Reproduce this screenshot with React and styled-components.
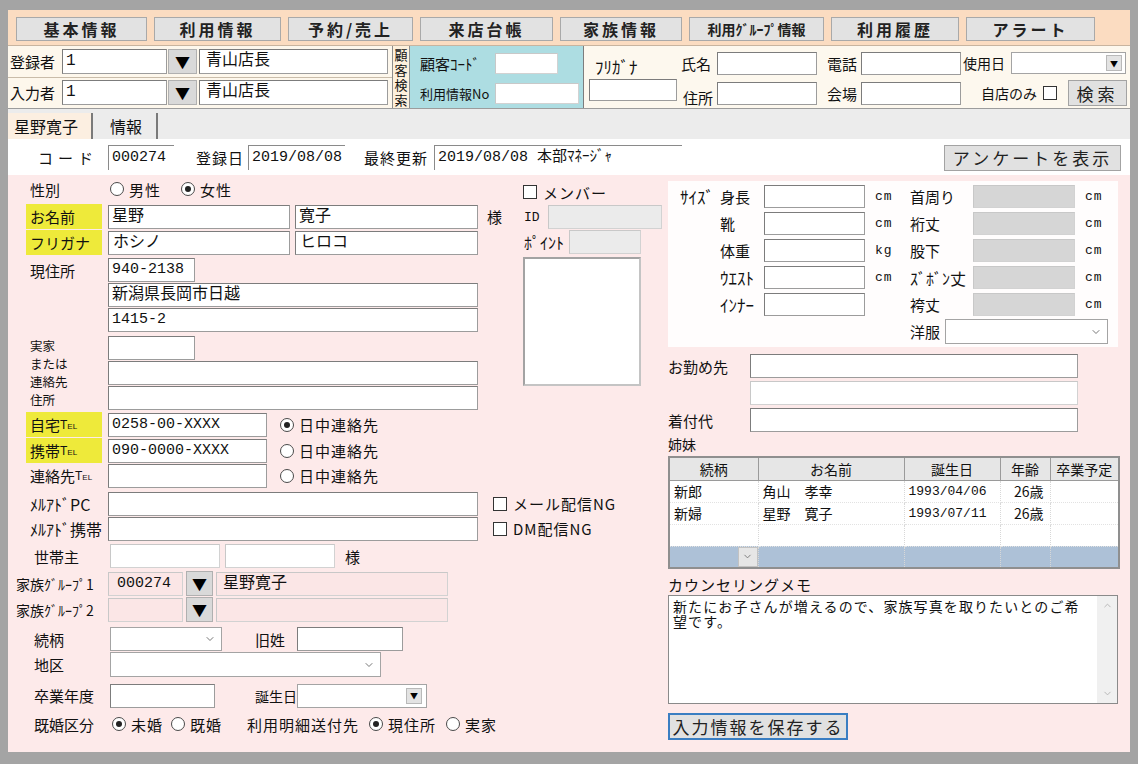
import React from "react";
import styled, { createGlobalStyle } from "styled-components";
import { ChevronDown, ChevronUp } from "lucide-react";

const MONO = `"Liberation Mono", "Noto Sans CJK JP", monospace`;
const JP = `"Noto Sans CJK JP", "Liberation Sans", sans-serif`;

const GlobalStyle = createGlobalStyle`
  html, body {
    margin: 0;
    padding: 0;
    background: #a4a4a4;
  }
  body {
    font-family: ${JP};
    color: #111;
  }
  * {
    box-sizing: border-box;
  }
`;

const Frame = styled.div`
  width: 1138px;
  height: 764px;
  padding: 10px 10px 12px 8px;
  background: #a4a4a4;
  display: flex;
`;

const Window = styled.div`
  flex: 1;
  display: flex;
  flex-direction: column;
  background: #fdeaea;
`;

/* ---------- top nav ---------- */

const NavBar = styled.div`
  height: 35px;
  background: #fbdcc1;
  display: flex;
  align-items: flex-start;
  padding: 7px 0 0 8px;
  gap: 7px;
`;

const NavButton = styled.div`
  width: ${(p) => p.$w}px;
  height: 24px;
  background: #e2e2e2;
  border: 1px solid #a9a9a9;
  display: flex;
  align-items: center;
  justify-content: center;
  font-weight: bold;
  font-size: ${(p) => p.$fs || 16}px;
  letter-spacing: ${(p) => (p.$fs ? 0 : 3)}px;
  color: #222;
`;

/* ---------- search bar ---------- */

const SearchBar = styled.div`
  height: 64px;
  display: flex;
  border-top: 1px solid #c8b49f;
  border-bottom: 1px solid #9c9c9c;
`;

const RegPanel = styled.div`
  width: 384px;
  background: #fdf7ec;
  display: flex;
  flex-direction: column;
`;

const RegRow = styled.div`
  flex: 1;
  display: flex;
  align-items: center;
  padding-left: 2px;
  border-bottom: ${(p) => (p.$last ? "none" : "1px solid #c9bca9")};
`;

const VLabel = styled.div`
  width: 18px;
  background: #fdf0dc;
  border-left: 1px solid #8d8d8d;
  border-right: 1px solid #8d8d8d;
  display: flex;
  flex-direction: column;
  align-items: center;
  justify-content: center;
`;

const VChar = styled.span`
  font-size: 13px;
  line-height: 15px;
  height: 15px;
`;

const BluePanel = styled.div`
  width: 173px;
  background: #addde2;
  padding: 2px 0 0 10px;
  display: flex;
  flex-direction: column;
`;

const SearchRow = styled.div`
  height: 31px;
  display: flex;
  align-items: center;
  justify-content: ${(p) => p.$justify || "flex-start"};
`;

const FindPanel = styled.div`
  flex: 1;
  background: #fdf8ee;
  border-left: 1px solid #7d7d7d;
  display: flex;
  padding: 2px 3px 0 5px;
`;

const FuriCol = styled.div`
  width: 92px;
  display: flex;
  flex-direction: column;
  padding-top: 6px;
`;

const FindCol = styled.div`
  display: flex;
  flex-direction: column;
  margin-left: ${(p) => p.$ml || 0}px;
  flex: ${(p) => (p.$grow ? 1 : "none")};
`;

/* ---------- tabs & code row ---------- */

const TabStrip = styled.div`
  height: 31px;
  background: #ececec;
  display: flex;
  align-items: flex-end;
  border-bottom: 1px solid #fff;
`;

const Tab = styled.div`
  width: ${(p) => p.$w}px;
  height: 26px;
  margin-left: ${(p) => p.$ml || 0}px;
  background: ${(p) => (p.$active ? "#fcefe1" : "transparent")};
  border-right: 2px solid #7a7a7a;
  font-size: 16px;
  line-height: 26px;
  padding-left: ${(p) => p.$pl || 6}px;
`;

const CodeRow = styled.div`
  height: 35px;
  background: #fff;
  display: flex;
  align-items: center;
  padding-left: 22px;
`;

const CodeField = styled.div`
  width: ${(p) => p.$w}px;
  height: 25px;
  border-left: 1px solid #8a8a8a;
  border-top: 1px solid #8a8a8a;
  font-family: ${MONO};
  font-size: 15px;
  line-height: 24px;
  padding-left: 3px;
  white-space: nowrap;
`;

const WideButton = styled.div`
  width: ${(p) => p.$w}px;
  height: ${(p) => p.$h || 26}px;
  margin-left: ${(p) => (p.$auto ? "auto" : `${p.$ml || 0}px`)};
  margin-right: ${(p) => p.$mr || 0}px;
  margin-top: ${(p) => p.$mt || 0}px;
  background: #e1e1e1;
  border: ${(p) => (p.$focus ? "2px solid #3a7ec2" : "1px solid #a3a3a3")};
  display: flex;
  align-items: center;
  justify-content: center;
  font-size: 17px;
  letter-spacing: ${(p) => p.$ls ?? 3}px;
  color: #222;
  flex-shrink: 0;
`;

/* ---------- generic form parts ---------- */

const Label = styled.span`
  width: ${(p) => p.$w ?? 76}px;
  margin-left: ${(p) => p.$ml || 0}px;
  margin-right: ${(p) => p.$mr ?? 6}px;
  padding-left: ${(p) => p.$pl ?? 4}px;
  padding-top: ${(p) => p.$pt || 0}px;
  height: ${(p) => (p.$lh24 ? "24px" : "auto")};
  align-self: ${(p) => (p.$top ? "flex-start" : "stretch")};
  display: flex;
  flex-direction: ${(p) => (p.$col ? "column" : "row")};
  align-items: ${(p) => (p.$col ? "flex-start" : p.$bottom ? "flex-end" : "center")};
  flex-shrink: 0;
  font-size: ${(p) => p.$fs || 15}px;
  letter-spacing: ${(p) => p.$ls || 0}px;
  line-height: ${(p) => p.$lh || "normal"};
  background: ${(p) => (p.$hl ? "#eeea3a" : "transparent")};
  white-space: nowrap;
  font-family: ${(p) => (p.$mono ? MONO : JP)};
`;

const Small = styled.span`
  font-size: 12px;
  font-variant: small-caps;
  font-family: "Liberation Sans", sans-serif;
`;

const Field = styled.div`
  width: ${(p) => p.$w}px;
  height: ${(p) => p.$h || 24}px;
  margin-left: ${(p) => p.$ml || 0}px;
  border: 1px solid ${(p) => (p.$soft ? "#d2d2d2" : "#9c9c9c")};
  border-top-color: ${(p) => (p.$soft ? "#c8c8c8" : "#7c7c7c")};
  border-left-color: ${(p) => (p.$soft ? "#c8c8c8" : "#7c7c7c")};
  background: ${(p) => p.$bg || "#fff"};
  font-family: ${MONO};
  font-size: ${(p) => p.$fs || 15}px;
  line-height: ${(p) => (p.$h || 24) - 2}px;
  padding-left: ${(p) => p.$pl ?? 3}px;
  white-space: nowrap;
  overflow: hidden;
  flex-shrink: 0;
`;

const DropBtn = styled.div`
  width: ${(p) => p.$w}px;
  height: ${(p) => p.$h || 25}px;
  margin-left: ${(p) => p.$ml || 0}px;
  background: #d9d9d9;
  border: 1px solid #b0b0b0;
  display: flex;
  align-items: center;
  justify-content: center;
  font-size: 15px;
  color: #000;
  flex-shrink: 0;
`;

const Select = styled.div`
  width: ${(p) => p.$w}px;
  height: ${(p) => p.$h || 24}px;
  margin-left: ${(p) => p.$ml || 0}px;
  background: #fff;
  border: 1px solid #a4a4a4;
  display: flex;
  align-items: center;
  justify-content: flex-end;
  padding-right: ${(p) => p.$pr ?? 5}px;
  color: #777;
  flex-shrink: 0;
`;

const MiniDrop = styled.span`
  width: 16px;
  height: 16px;
  background: #e3e3e3;
  border: 1px solid #b9b9b9;
  font-size: 8px;
  display: flex;
  align-items: center;
  justify-content: center;
  color: #000;
`;

const Row = styled.div`
  display: flex;
  align-items: center;
  height: ${(p) => p.$h || 24}px;
  margin-top: ${(p) => p.$mt || 0}px;
  margin-left: ${(p) => p.$ml || 0}px;
`;

const Block = styled.div`
  display: flex;
  margin-top: ${(p) => p.$mt || 0}px;
`;

const Stack = styled.div`
  display: flex;
  flex-direction: column;
  gap: 1px;
`;

const Text = styled.span`
  margin-left: ${(p) => p.$ml || 0}px;
  font-size: ${(p) => p.$fs || 15}px;
  letter-spacing: ${(p) => p.$ls || 0}px;
  font-family: ${(p) => (p.$mono ? MONO : JP)};
  white-space: nowrap;
`;

const RadioItem = styled.span`
  display: inline-flex;
  align-items: center;
  margin-left: ${(p) => p.$ml || 0}px;
  font-size: 15px;
  letter-spacing: 1px;
  white-space: nowrap;
`;

const Circle = styled.span`
  width: 14px;
  height: 14px;
  border-radius: 50%;
  border: 1px solid #4a4a4a;
  background: #fff;
  margin-right: 5px;
  display: inline-flex;
  align-items: center;
  justify-content: center;
  &::after {
    content: "";
    width: 6px;
    height: 6px;
    border-radius: 50%;
    background: ${(p) => (p.$on ? "#222" : "transparent")};
  }
`;

const Box = styled.span`
  width: 14px;
  height: 14px;
  border: 1px solid #333;
  background: #fff;
  margin-right: ${(p) => p.$mr ?? 6}px;
  margin-left: ${(p) => p.$ml || 0}px;
  flex-shrink: 0;
`;

const Radio = ({ on, ml, children }) => (
  <RadioItem $ml={ml}>
    <Circle $on={on} />
    {children}
  </RadioItem>
);

const Check = ({ ml, children }) => (
  <RadioItem $ml={ml}>
    <Box />
    {children}
  </RadioItem>
);

/* ---------- body ---------- */

const Body = styled.div`
  flex: 1;
  display: flex;
  background: #fdeaea;
`;

const LeftPane = styled.div`
  width: 660px;
  padding: 4px 0 0 18px;
  display: flex;
  flex-direction: column;
`;

const TopBlock = styled.div`
  display: flex;
`;

const TopFields = styled.div`
  width: 497px;
  display: flex;
  flex-direction: column;
`;

const MemberCol = styled.div`
  display: flex;
  flex-direction: column;
  padding-top: 3px;
`;

const ListBox = styled.div`
  width: 118px;
  height: 129px;
  margin-top: 3px;
  background: #fff;
  border: 2px solid #a3a3a3;
  border-right-color: #c4c4c4;
  border-bottom-color: #c4c4c4;
`;

const RightPane = styled.div`
  flex: 1;
  padding: 6px 10px 0 0;
  display: flex;
  flex-direction: column;
`;

const SizePanel = styled.div`
  width: 450px;
  height: 166px;
  background: #fffdfd;
  padding: 4px 0 0 12px;
  display: flex;
  flex-direction: column;
`;

const SizeGrid = styled.div`
  display: grid;
  grid-template-columns: 40px 44px 101px 45px 63px 102px 1fr;
  grid-auto-rows: 23px;
  row-gap: 4px;
  align-items: center;
  font-size: 15px;
`;

const Unit = styled.span`
  font-family: ${MONO};
  font-size: 13px;
  padding-left: 10px;
  letter-spacing: 1px;
`;

const SisterTable = styled.table`
  width: 450px;
  margin-top: 2px;
  border-collapse: collapse;
  table-layout: fixed;
  border: 2px solid #8f8f8f;
  background: #fff;
  font-size: 14px;
`;

const Th = styled.th`
  height: 23px;
  width: ${(p) => p.$w}px;
  background: #e6e6e6;
  border-right: 1px solid #9a9a9a;
  border-bottom: 1px solid #9a9a9a;
  font-weight: normal;
  text-align: center;
  padding: 0;
`;

const Td = styled.td`
  height: 22px;
  padding: 0 ${(p) => (p.$right ? 6 : 4)}px 0 4px;
  border-right: 1px dotted #d8d8d8;
  border-bottom: 1px dotted #e2e2e2;
  background: ${(p) => (p.$sel ? "#adc1d7" : "#fff")};
  text-align: ${(p) => (p.$right ? "right" : "left")};
  font-family: ${(p) => (p.$mono ? MONO : JP)};
  font-size: ${(p) => (p.$mono ? 13 : 14)}px;
  white-space: nowrap;
`;

const CellDrop = styled.div`
  display: flex;
  justify-content: flex-end;
  margin-right: -4px;
`;

const CellDropBox = styled.span`
  width: 20px;
  height: 20px;
  background: #e6e6e6;
  border: 1px solid #c2c2c2;
  display: flex;
  align-items: center;
  justify-content: center;
  color: #777;
`;

const Memo = styled.div`
  width: 450px;
  height: 109px;
  background: #fff;
  border: 1px solid #8a8a8a;
  display: flex;
`;

const MemoText = styled.div`
  flex: 1;
  padding: 3px 4px;
  font-size: 14px;
  line-height: 15px;
  letter-spacing: 1.1px;
`;

const ScrollTrack = styled.div`
  width: 20px;
  background: #f0f0f0;
  display: flex;
  flex-direction: column;
  justify-content: space-between;
  align-items: center;
  padding: 4px 0;
  color: #b4b4b4;
`;

const sizeRows = [
  { head: "ｻｲｽﾞ", l1: "身長", u1: "cm", l2: "首周り" },
  { head: "", l1: "靴", u1: "cm", l2: "裄丈" },
  { head: "", l1: "体重", u1: "kg", l2: "股下" },
  { head: "", l1: "ｳｴｽﾄ", u1: "cm", l2: "ｽﾞﾎﾞﾝ丈" },
  { head: "", l1: "ｲﾝﾅｰ", u1: "", l2: "袴丈" },
];

const isHalf = (s) => /[\uFF61-\uFF9F]/.test(s);

const sisters = [
  { rel: "新郎", name: "角山　孝幸", birth: "1993/04/06", age: "26歳" },
  { rel: "新婦", name: "星野　寛子", birth: "1993/07/11", age: "26歳" },
];

const navItems = [
  { label: "基本情報", w: 131 },
  { label: "利用情報", w: 127 },
  { label: "予約/売上", w: 125 },
  { label: "来店台帳", w: 133 },
  { label: "家族情報", w: 122 },
  { label: "利用ｸﾞﾙｰﾌﾟ情報", w: 135, fs: 14 },
  { label: "利用履歴", w: 128 },
  { label: "アラート", w: 129 },
];

export default function App() {
  return (
    <Frame>
      <GlobalStyle />
      <Window>
        <NavBar>
          {navItems.map((n) => (
            <NavButton key={n.label} $w={n.w} $fs={n.fs}>
              {n.label}
            </NavButton>
          ))}
        </NavBar>

        <SearchBar>
          <RegPanel>
            <RegRow>
              <Label $w={52} $mr={0} $pl={0}>登録者</Label>
              <Field $w={105} $h={25} $fs={16}>1</Field>
              <DropBtn $w={29} $ml={1}>▼</DropBtn>
              <Field $w={189} $h={25} $ml={2} $fs={16} $pl={6}>青山店長</Field>
            </RegRow>
            <RegRow $last>
              <Label $w={52} $mr={0} $pl={0}>入力者</Label>
              <Field $w={105} $h={25} $fs={16}>1</Field>
              <DropBtn $w={29} $ml={1}>▼</DropBtn>
              <Field $w={189} $h={25} $ml={2} $fs={16} $pl={6}>青山店長</Field>
            </RegRow>
          </RegPanel>
          <VLabel>
            {"顧客検索".split("").map((c) => (
              <VChar key={c}>{c}</VChar>
            ))}
          </VLabel>
          <BluePanel>
            <SearchRow>
              <Label $w={75} $mr={0} $pl={0} $fs={15}>顧客ｺｰﾄﾞ</Label>
              <Field $w={63} $h={21} $soft />
            </SearchRow>
            <SearchRow>
              <Label $w={75} $mr={0} $pl={0} $fs={13}>利用情報No</Label>
              <Field $w={84} $h={21} $soft />
            </SearchRow>
          </BluePanel>
          <FindPanel>
            <FuriCol>
              <Label $w={88} $mr={0} $pl={6} $fs={17}>ﾌﾘｶﾞﾅ</Label>
              <Field $w={88} $h={22} />
            </FuriCol>
            <FindCol>
              <SearchRow>
                <Label $w={36} $mr={0} $pl={0}>氏名</Label>
                <Field $w={100} $h={23} />
              </SearchRow>
              <SearchRow>
                <Label $w={36} $mr={0} $pl={2} $bottom>住所</Label>
                <Field $w={100} $h={23} />
              </SearchRow>
            </FindCol>
            <FindCol $ml={10}>
              <SearchRow>
                <Label $w={34} $mr={0} $pl={0}>電話</Label>
                <Field $w={100} $h={23} />
              </SearchRow>
              <SearchRow>
                <Label $w={34} $mr={0} $pl={0}>会場</Label>
                <Field $w={100} $h={23} />
              </SearchRow>
            </FindCol>
            <FindCol $ml={2} $grow>
              <SearchRow>
                <Label $w={48} $mr={0} $pl={0} $fs={14}>使用日</Label>
                <Select $w={115} $h={22} $pr={3}>
                  <MiniDrop>▼</MiniDrop>
                </Select>
              </SearchRow>
              <SearchRow $justify="flex-end">
                <Text $fs={14}>自店のみ</Text>
                <Box $ml={6} $mr={0} />
                <WideButton $w={59} $ml={11} $ls={4}>検索</WideButton>
              </SearchRow>
            </FindCol>
          </FindPanel>
        </SearchBar>

        <TabStrip>
          <Tab $w={85} $active>星野寛子</Tab>
          <Tab $w={61} $ml={4} $pl={13}>情報</Tab>
        </TabStrip>

        <CodeRow>
          <Label $w={78} $mr={0} $pl={8} $ls={5}>コード</Label>
          <CodeField $w={66}>000274</CodeField>
          <Label $w={52} $ml={22} $mr={0} $pl={0} $ls={1}>登録日</Label>
          <CodeField $w={97}>2019/08/08</CodeField>
          <Label $w={70} $ml={19} $mr={0} $pl={0} $ls={1}>最終更新</Label>
          <CodeField $w={248}>2019/08/08 本部ﾏﾈｰｼﾞｬ</CodeField>
          <WideButton $w={177} $auto $mr={9}>アンケートを表示</WideButton>
        </CodeRow>

        <Body>
          <LeftPane>
            <TopBlock>
              <TopFields>
                <Row $h={20}>
                  <Label>性別</Label>
                  <Radio ml={2}>男性</Radio>
                  <Radio ml={20} on>女性</Radio>
                </Row>
                <Row $h={25} $mt={5}>
                  <Label $hl>お名前</Label>
                  <Field $w={182} $fs={16}>星野</Field>
                  <Field $w={183} $ml={5} $fs={16}>寛子</Field>
                  <Text $ml={9}>様</Text>
                </Row>
                <Row $h={25} $mt={1}>
                  <Label $hl>フリガナ</Label>
                  <Field $w={182} $fs={16} $pl={4}>ホシノ</Field>
                  <Field $w={183} $ml={5} $fs={16} $pl={4}>ヒロコ</Field>
                </Row>
                <Block $mt={3}>
                  <Label $top $lh24>現住所</Label>
                  <Stack>
                    <Field $w={87}>940-2138</Field>
                    <Field $w={370} $fs={16}>新潟県長岡市日越</Field>
                    <Field $w={370}>1415-2</Field>
                  </Stack>
                </Block>
                <Block $mt={4}>
                  <Label $top $col $fs={12.5} $lh="18px" $pt={1}>
                    <span>実家</span>
                    <span>または</span>
                    <span>連絡先</span>
                    <span>住所</span>
                  </Label>
                  <Stack>
                    <Field $w={87} />
                    <Field $w={370} />
                    <Field $w={370} />
                  </Stack>
                </Block>
              </TopFields>
              <MemberCol>
                <Row $h={20}>
                  <Check>メンバー</Check>
                </Row>
                <Row $h={24} $mt={3}>
                  <Label $w={25} $mr={0} $pl={1} $mono $fs={13}>ID</Label>
                  <Field $w={114} $bg="#ebebeb" $soft />
                </Row>
                <Row $h={24} $mt={1}>
                  <Label $w={46} $mr={0} $pl={1} $fs={16}>ﾎﾟｲﾝﾄ</Label>
                  <Field $w={72} $bg="#ebebeb" $soft />
                </Row>
                <ListBox />
              </MemberCol>
            </TopBlock>

            <Row $h={25} $mt={2}>
              <Label $hl>自宅<Small>Tel</Small></Label>
              <Field $w={159}>0258-00-XXXX</Field>
              <Radio ml={13} on>日中連絡先</Radio>
            </Row>
            <Row $h={25} $mt={1}>
              <Label $hl>携帯<Small>Tel</Small></Label>
              <Field $w={159}>090-0000-XXXX</Field>
              <Radio ml={13}>日中連絡先</Radio>
            </Row>
            <Row $h={25}>
              <Label>連絡先<Small>Tel</Small></Label>
              <Field $w={159} />
              <Radio ml={13}>日中連絡先</Radio>
            </Row>
            <Row $h={25} $mt={3}>
              <Label $fs={16}>ﾒﾙｱﾄﾞPC</Label>
              <Field $w={370} />
              <Check ml={15}>メール配信NG</Check>
            </Row>
            <Row $h={25}>
              <Label $fs={16}>ﾒﾙｱﾄﾞ携帯</Label>
              <Field $w={370} />
              <Check ml={15}>DM配信NG</Check>
            </Row>
            <Row $h={24} $mt={3}>
              <Label $pl={8}>世帯主</Label>
              <Field $w={110} $ml={2} $soft />
              <Field $w={110} $ml={5} $soft />
              <Text $ml={10}>様</Text>
            </Row>
            <Row $h={25} $mt={3}>
              <Label $w={86} $ml={-10} $pl={0} $fs={14}>家族ｸﾞﾙｰﾌﾟ1</Label>
              <Field $w={75} $bg="#fbe6e6" $soft $pl={8}>000274</Field>
              <DropBtn $w={27} $ml={3}>▼</DropBtn>
              <Field $w={232} $ml={3} $bg="#fbe6e6" $soft $fs={16} $pl={6}>星野寛子</Field>
            </Row>
            <Row $h={25} $mt={1}>
              <Label $w={86} $ml={-10} $pl={0} $fs={14}>家族ｸﾞﾙｰﾌﾟ2</Label>
              <Field $w={75} $bg="#fbe6e6" $soft />
              <DropBtn $w={27} $ml={3}>▼</DropBtn>
              <Field $w={232} $ml={3} $bg="#fbe6e6" $soft />
            </Row>
            <Row $h={24} $mt={5}>
              <Label $pl={8}>続柄</Label>
              <Select $w={112} $ml={2}>
                <ChevronDown size={12} />
              </Select>
              <Label $w={42} $ml={33} $mr={0} $pl={0}>旧姓</Label>
              <Field $w={106} />
            </Row>
            <Row $h={25} $mt={1}>
              <Label $pl={8}>地区</Label>
              <Select $w={271} $ml={2} $h={25}>
                <ChevronDown size={12} />
              </Select>
            </Row>
            <Row $h={25} $mt={6}>
              <Label $pl={8}>卒業年度</Label>
              <Field $w={105} $ml={2} />
              <Label $w={42} $ml={40} $mr={0} $pl={0} $fs={14}>誕生日</Label>
              <Select $w={130} $pr={4}>
                <MiniDrop>▼</MiniDrop>
              </Select>
            </Row>
            <Row $h={22} $mt={5}>
              <Label $pl={8}>既婚区分</Label>
              <Radio ml={4} on>未婚</Radio>
              <Radio ml={8}>既婚</Radio>
              <Text $ml={25} $ls={1}>利用明細送付先</Text>
              <Radio ml={10} on>現住所</Radio>
              <Radio ml={10}>実家</Radio>
            </Row>
          </LeftPane>

          <RightPane>
            <SizePanel>
              <SizeGrid>
                {sizeRows.map((r) => (
                  <React.Fragment key={r.l1}>
                    <Text $fs={17}>{r.head}</Text>
                    <Text $fs={isHalf(r.l1) ? 17 : 15}>{r.l1}</Text>
                    <Field $w={101} $h={23} />
                    <Unit>{r.u1}</Unit>
                    <Text $fs={isHalf(r.l2) ? 16 : 15}>{r.l2}</Text>
                    <Field $w={102} $h={23} $bg="#d6d6d6" $soft />
                    <Unit>cm</Unit>
                  </React.Fragment>
                ))}
              </SizeGrid>
              <Row $h={25} $mt={3} $ml={230}>
                <Label $w={35} $mr={0} $pl={0}>洋服</Label>
                <Select $w={163} $h={25}>
                  <ChevronDown size={12} />
                </Select>
              </Row>
            </SizePanel>

            <Row $h={24} $mt={7}>
              <Label $w={82} $mr={0} $pl={0}>お勤め先</Label>
              <Field $w={328} />
            </Row>
            <Row $h={24} $mt={3} $ml={82}>
              <Field $w={328} $soft />
            </Row>
            <Row $h={24} $mt={3}>
              <Label $w={82} $mr={0} $pl={0}>着付代</Label>
              <Field $w={328} />
            </Row>
            <Row $h={20} $mt={2}>
              <Text $fs={14}>姉妹</Text>
            </Row>
            <SisterTable>
              <thead>
                <tr>
                  <Th $w={89}>続柄</Th>
                  <Th $w={146}>お名前</Th>
                  <Th $w={96}>誕生日</Th>
                  <Th $w={50}>年齢</Th>
                  <Th $w={69}>卒業予定</Th>
                </tr>
              </thead>
              <tbody>
                {sisters.map((s) => (
                  <tr key={s.rel}>
                    <Td>{s.rel}</Td>
                    <Td>{s.name}</Td>
                    <Td $mono>{s.birth}</Td>
                    <Td $right>{s.age}</Td>
                    <Td />
                  </tr>
                ))}
                <tr>
                  <Td />
                  <Td />
                  <Td />
                  <Td />
                  <Td />
                </tr>
                <tr>
                  <Td $sel>
                    <CellDrop>
                      <CellDropBox>
                        <ChevronDown size={11} />
                      </CellDropBox>
                    </CellDrop>
                  </Td>
                  <Td $sel />
                  <Td $sel />
                  <Td $sel />
                  <Td $sel />
                </tr>
              </tbody>
            </SisterTable>
            <Row $h={22} $mt={4}>
              <Text $ls={1}>カウンセリングメモ</Text>
            </Row>
            <Memo>
              <MemoText>新たにお子さんが増えるので、家族写真を取りたいとのご希望です。</MemoText>
              <ScrollTrack>
                <ChevronUp size={11} />
                <ChevronDown size={11} />
              </ScrollTrack>
            </Memo>
            <WideButton $w={180} $h={27} $mt={9} $focus $ls={2}>
              入力情報を保存する
            </WideButton>
          </RightPane>
        </Body>
      </Window>
    </Frame>
  );
}
